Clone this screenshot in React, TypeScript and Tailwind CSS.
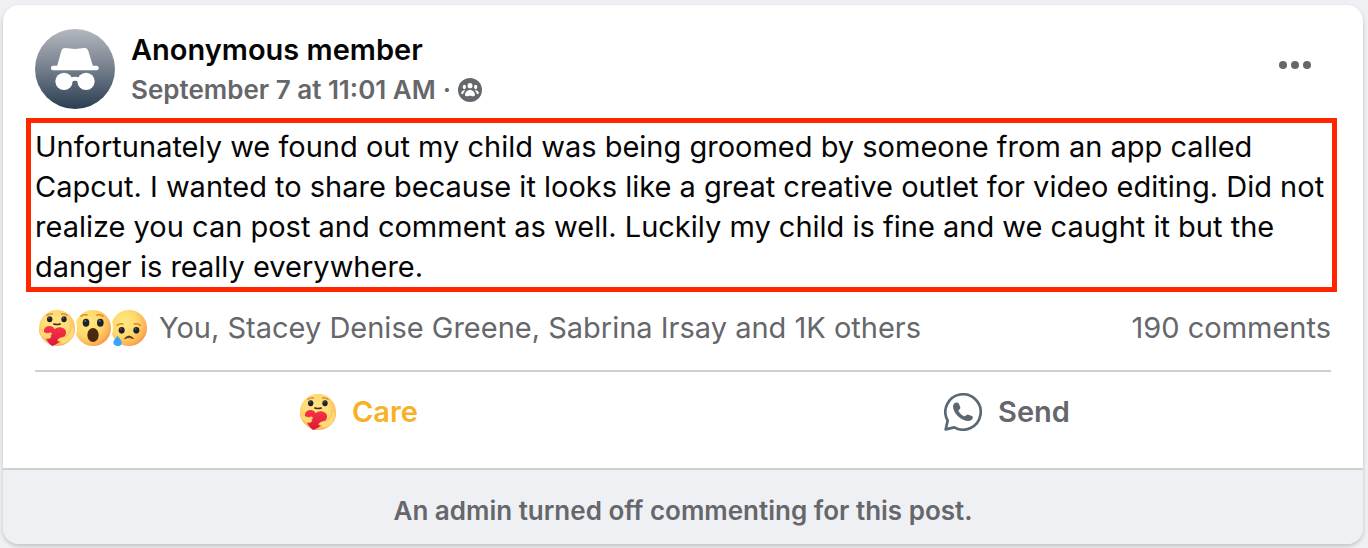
import React, { useId } from "react";

function AnonymousAvatar() {
  return (
    <svg viewBox="0 0 240 240" className="size-20 shrink-0" role="img" aria-label="Anonymous member">
      <defs>
        <linearGradient id="avatar-fill" x1="0" y1="0" x2="0" y2="1">
          <stop offset="0" stopColor="#b4b8bf" />
          <stop offset="0.5" stopColor="#747e8b" />
          <stop offset="1" stopColor="#2a3d52" />
        </linearGradient>
      </defs>
      <circle cx="120" cy="120" r="120" fill="url(#avatar-fill)" />
      <g fill="#fff">
        <path d="M66 112 L79 66 Q82 56 92 57 Q105 58 120 60 Q135 58 147 57 Q157 56 160 66 L174 112 Z" />
        <rect x="48" y="110" width="143" height="14" rx="6" />
        <circle cx="87" cy="157" r="26" />
        <circle cx="153" cy="157" r="26" />
        <path d="M106 146 Q120 140 134 146 L134 158 Q120 152 106 158 Z" />
      </g>
    </svg>
  );
}

function GroupIcon() {
  return (
    <svg viewBox="0 0 72 72" className="size-6 shrink-0" role="img" aria-label="Group members">
      <circle cx="36" cy="36" r="36" fill="#65676b" />
      <g fill="#fff">
        <ellipse cx="36" cy="23" rx="7.5" ry="8" />
        <ellipse cx="19" cy="27" rx="5" ry="6.5" />
        <ellipse cx="53" cy="27" rx="5" ry="6.5" />
        <path d="M36 36c9 0 15 8 15 14 0 4-3 5-6 5-4 0-5-2-9-2s-5 2-9 2c-3 0-6-1-6-5 0-6 6-14 15-14z" />
        <path d="M22 37c-4 4-6 8-7 12-5 0-6-3-5-6 1-4 6-8 12-6z" />
        <path d="M50 37c4 4 6 8 7 12 5 0 6-3 5-6-1-4-6-8-12-6z" />
      </g>
    </svg>
  );
}

function FaceFill({ id }: { id: string }) {
  return (
    <defs>
      <radialGradient id={id} cx="0.36" cy="0.36" r="0.76">
        <stop offset="0" stopColor="#ffea82" />
        <stop offset="0.5" stopColor="#fed86c" />
        <stop offset="0.8" stopColor="#fbb153" />
        <stop offset="1" stopColor="#f4813f" />
      </radialGradient>
    </defs>
  );
}

function CareFace() {
  const id = useId();
  return (
    <svg viewBox="0 0 108 108" className="size-9 shrink-0" role="img" aria-label="Care">
      <defs>
        <radialGradient id={id} cx="0.45" cy="0.42" r="0.62">
          <stop offset="0" stopColor="#ffe788" />
          <stop offset="0.6" stopColor="#fedc74" />
          <stop offset="0.88" stopColor="#fbbd62" />
          <stop offset="1" stopColor="#f69a50" />
        </radialGradient>
        <linearGradient id={id + "-heart"} x1="0" y1="0" x2="0" y2="1">
          <stop offset="0" stopColor="#fa3346" />
          <stop offset="1" stopColor="#d8183c" />
        </linearGradient>
      </defs>
      <circle cx="54" cy="54" r="54" fill={`url(#${id})`} />
      <g fill="none" stroke="#d9822b" strokeWidth="4" strokeLinecap="round">
        <path d="M24 16 Q31 10 40 12" />
        <path d="M68 12 Q77 10 84 16" />
      </g>
      <ellipse cx="32" cy="28" rx="8" ry="9" fill="#1f2029" />
      <ellipse cx="75" cy="28" rx="8" ry="9" fill="#1f2029" />
      <circle cx="30" cy="24" r="2.5" fill="#666a7c" />
      <circle cx="73" cy="24" r="2.5" fill="#666a7c" />
      <path d="M44 42 Q54 45 64 42" fill="none" stroke="#4b280e" strokeWidth="4" strokeLinecap="round" />
      <path
        d="M47 58 C42 44 18 45 15 60 C13 76 25 98 39 108 C57 103 77 88 81 70 C84 52 56 46 47 58 Z"
        fill={`url(#${id}-heart)`}
      />
      <path
        d="M1 62 C3 56 8 58 12 64 C18 70 26 71 33 68 C40 68 40 74 34 76 C39 78 35 86 27 86 C13 87 3 76 1 62 Z"
        fill="#ffd973"
        stroke="#f5ad55"
        strokeWidth="1.5"
      />
      <path
        d="M95 46 C98 60 94 70 84 78 C74 82 64 82 58 87 C53 93 60 96 65 94 C62 102 70 104 79 100 C98 92 107 76 106 60"
        fill="#ffd973"
        stroke="#f5ad55"
        strokeWidth="1.5"
      />
    </svg>
  );
}

function WowFace() {
  const id = useId();
  return (
    <svg viewBox="0 0 108 108" className="size-9 shrink-0" role="img" aria-label="Wow">
      <FaceFill id={id} />
      <circle cx="54" cy="54" r="54" fill={`url(#${id})`} />
      <g fill="none" stroke="#e0832c" strokeWidth="4.5" strokeLinecap="round">
        <path d="M18 19 Q25 12 36 15" />
        <path d="M66 15 Q77 12 84 19" />
      </g>
      <ellipse cx="33" cy="38" rx="10" ry="12" fill="#1f2029" />
      <ellipse cx="76" cy="38" rx="10" ry="12" fill="#1f2029" />
      <circle cx="31" cy="33" r="3" fill="#666a7c" />
      <circle cx="74" cy="33" r="3" fill="#666a7c" />
      <ellipse cx="54" cy="75" rx="17" ry="21" fill="#4b280e" />
    </svg>
  );
}

function SadFace() {
  const id = useId();
  return (
    <svg viewBox="0 0 108 108" className="size-9 shrink-0" role="img" aria-label="Sad">
      <FaceFill id={id} />
      <circle cx="54" cy="54" r="54" fill={`url(#${id})`} />
      <g fill="none" stroke="#e0832c" strokeWidth="4.5" strokeLinecap="round">
        <path d="M18 46 Q26 40 36 42" />
        <path d="M70 42 Q80 40 88 46" />
      </g>
      <ellipse cx="32" cy="61" rx="9" ry="10" fill="#1f2029" />
      <ellipse cx="76" cy="61" rx="9" ry="10" fill="#1f2029" />
      <circle cx="30" cy="57" r="2.5" fill="#666a7c" />
      <circle cx="74" cy="57" r="2.5" fill="#666a7c" />
      <path d="M40 86 Q54 70 68 86 Q54 79 40 86 Z" fill="#4b280e" stroke="#4b280e" strokeWidth="2" strokeLinejoin="round" />
      <path d="M20 77 C24 84 32 90 32 98 C32 106 26 108 20 108 C13 108 7 105 7 97 C7 90 16 84 20 77 Z" fill="#38a6f6" />
    </svg>
  );
}

function SendIcon() {
  return (
    <svg viewBox="0 0 114 114" className="size-[38px] shrink-0" aria-hidden="true">
      <path
        d="M11 83 A53 53 0 1 1 31 103 L5 109 Z"
        fill="none"
        stroke="#5b6874"
        strokeWidth="8"
        strokeLinejoin="round"
      />
      <path
        d="M31 31 C36 27 43 27 45 33 L49 43 C50 48 45 50 43 53 C47 61 54 67 61 70 C66 70 68 63 73 65 L84 69 C89 72 86 79 81 82 C74 86 66 84 59 81 C45 75 35 64 30 53 C26 43 26 36 31 31 Z"
        fill="#5b6874"
      />
    </svg>
  );
}

const summary = "You, Stacey Denise Greene, Sabrina Irsay and 1K others";

export default function App() {
  return (
    <main className="min-h-screen bg-[#eff0f4] pt-[5px] pr-[5px] pb-1 pl-[3px] font-['Inter','Liberation_Sans',sans-serif]">
      <article className="overflow-hidden rounded-2xl bg-white shadow-[0_2px_4px_rgba(0,0,0,0.2)]">
        <header className="flex px-8 pt-6">
          <AnonymousAvatar />
          <div className="ml-4 flex-1 pt-px">
            <h1 className="text-[29px] leading-10 font-semibold text-[#050505]">Anonymous member</h1>
            <div className="flex items-center text-[26px] leading-10 font-semibold text-[#65676b]">
              <a href="#post">September 7 at 11:01 AM</a>
              <span className="mx-[7px]">·</span>
              <GroupIcon />
            </div>
          </div>
          <button type="button" aria-label="Post options" className="mt-4 mr-5 flex h-10 items-center gap-1">
            <span className="size-2 rounded-full bg-[#65676b]" />
            <span className="size-2 rounded-full bg-[#65676b]" />
            <span className="size-2 rounded-full bg-[#65676b]" />
          </button>
        </header>

        <p className="mt-2 mr-[26px] ml-[23px] border-[5px] border-[#ff2600] pt-1 pl-1 text-[29px] leading-10 text-[#050505]">
          Unfortunately we found out my child was being groomed by someone from an app called Capcut. I wanted to share
          because it looks like a great creative outlet for video editing. Did not realize you can post and comment as
          well. Luckily my child is fine and we caught it but the danger is really everywhere.
        </p>

        <div className="mx-8 flex items-center justify-between border-b-2 border-[#ced0d4] pt-4 pb-[22px] text-[29px] leading-10 text-[#65676b]">
          <div className="flex items-center">
            <div className="flex pl-0.5">
              <span className="z-20 rounded-full border-2 border-white">
                <CareFace />
              </span>
              <span className="z-10 -ml-1 rounded-full border-2 border-white">
                <WowFace />
              </span>
              <span className="-ml-1 rounded-full border-2 border-white">
                <SadFace />
              </span>
            </div>
            <a href="#reactions" className="ml-2.5">
              {summary}
            </a>
          </div>
          <a href="#comments">190 comments</a>
        </div>

        <div className="mx-8 grid grid-cols-2 pb-4 text-[29px] leading-10 font-semibold">
          <button type="button" className="flex h-20 items-center justify-center gap-4 text-[#f7b125]">
            <CareFace />
            Care
          </button>
          <button type="button" className="flex h-20 items-center justify-center gap-4 text-[#65676b]">
            <SendIcon />
            Send
          </button>
        </div>

        <footer className="border-t-2 border-[#ced0d1] bg-[#eff0f4] pt-[21px] pb-[13px] text-center text-[26px] leading-10 font-semibold text-[#65676b]">
          An admin turned off commenting for this post.
        </footer>
      </article>
    </main>
  );
}
